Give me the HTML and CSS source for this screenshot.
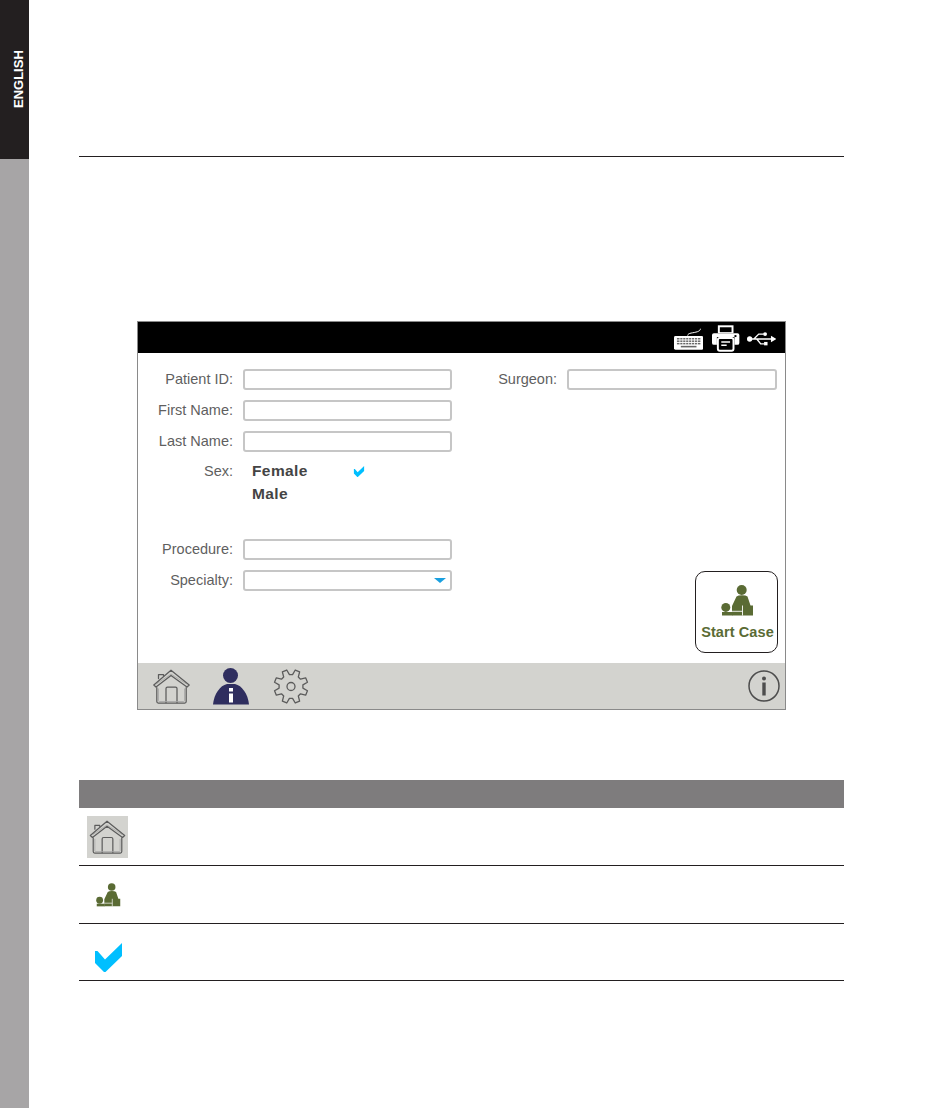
FILE: index.html
```html
<!DOCTYPE html>
<html lang="en">
<head>
<meta charset="utf-8">
<title>Patient screen</title>
<link rel="stylesheet" href="styles.css">
</head>
<body>
<svg class="defs" width="0" height="0" aria-hidden="true">
  <symbol id="home" viewBox="0 0 37 35">
    <path fill="none" stroke="#b0b0ac" stroke-width="1" d="M3.500 15 18 5 33.500 15"/>
    <g fill="none" stroke="#5c5c5c" stroke-width="1.250" stroke-linejoin="round" stroke-linecap="round">
      <path d="M5.500 9.500V5.500H10.500V6.500"/>
      <path d="M.8 16 18 1.200 36.200 16 34 18 18 6.500 3 18Z"/>
      <path d="M3.800 18.500V32.500Q3.800 34 5.300 34H31.700Q33.200 34 33.200 32.500V18.500"/>
      <path d="M13 33.500V19.500Q13 18 14.500 18H22.500Q24 18 24 19.500V33.500"/>
    </g>
    <g fill="none" stroke="#a5a5a5" stroke-width=".8">
      <path d="M5.500 19.500V31.500Q5.500 32.500 6.500 32.500H30.500Q31.500 32.500 31.500 31.500V19.500"/>
    </g>
  </symbol>
  <symbol id="case" viewBox="0 0 33 31">
    <circle cx="20.700" cy="5" r="5" fill="#5a6b34"/>
    <path fill="#5a6b34" d="M11 21 15.500 11.500Q17 10.300 21 10.300 25 10.300 26.500 11.500L29.500 20.500H32V30.500H11Z"/>
    <path fill="none" stroke="#fff" stroke-width=".9" d="M9 26.300H21.500M21.500 20.500V30.500"/>
    <circle cx="4.800" cy="22.400" r="4.500" fill="#5a6b34"/>
    <rect x="1" y="27" width="10.500" height="3.500" fill="#5a6b34"/>
  </symbol>
  <symbol id="check" viewBox="0 0 27 29">
    <path fill="#00bfff" d="M0 8H2.500L10 16.500 27 0V13L10.500 29H9L0 20Z"/>
  </symbol>
</svg>

<div class="page">
  <aside class="side">
    <div class="tab"><span class="tab-label">ENGLISH</span></div>
  </aside>

  <main class="content">
    <hr class="rule">

    <section class="screen">
      <header class="topbar">
        <svg class="i-keyboard" width="30" height="22" viewBox="0 0 30 22">
          <path d="M14 7.500C14 4.500 20 5 24 3.500 26 2.800 27 2 27 .5" fill="none" stroke="#fff" stroke-width="1"/>
          <rect x="0" y="8" width="30" height="14" rx="1.500" fill="#fff"/>
          <g fill="#666">
            <rect x="3" y="10" width="24" height="1.500"/>
            <rect x="3" y="12.500" width="24" height="1.500"/>
            <rect x="3" y="15" width="24" height="1.500"/>
            <rect x="7" y="18" width="16" height="1.600"/>
          </g>
          <path stroke="#fff" stroke-width=".8" d="M6 9.500V17M9 9.500V17M12 9.500V17M15 9.500V17M18 9.500V17M21 9.500V17M24 9.500V17"/>
        </svg>
        <svg class="i-printer" width="28" height="27" viewBox="0 0 28 27">
          <path d="M6 0H22V8H6Z" fill="#fff"/>
          <path d="M8 2H20V7H8Z" fill="#000"/>
          <path d="M2 8H26Q28 8 28 10V18Q28 20 26 20H23V12H5V20H2Q0 20 0 18V10Q0 8 2 8Z" fill="#fff"/>
          <rect x="23" y="10" width="2" height="2" fill="#000"/>
          <rect x="6" y="13" width="16" height="13" rx="2" fill="none" stroke="#fff" stroke-width="2"/>
          <path d="M9.500 17H18.500M9.500 20.500H15" stroke="#fff" stroke-width="1.600"/>
        </svg>
        <svg class="i-usb" width="30" height="14" viewBox="0 0 30 14">
          <circle cx="2.700" cy="7" r="2.700" fill="#fff"/>
          <path d="M2 7H26M7 7 12 2H17M10 7 14 12H18" fill="none" stroke="#fff" stroke-width="1.400"/>
          <path d="M24.500 3.800 30 7 24.500 10.200Z" fill="#fff"/>
          <circle cx="18.500" cy="2" r="2" fill="#fff"/>
          <rect x="17.500" y="10" width="3.500" height="3.500" fill="#fff"/>
        </svg>
      </header>

      <div class="form">
        <div class="col-left">
          <div class="row"><span class="label">Patient ID:</span><span class="field"></span></div>
          <div class="row"><span class="label">First Name:</span><span class="field"></span></div>
          <div class="row"><span class="label">Last Name:</span><span class="field"></span></div>
          <div class="sex">
            <span class="label sex-label">Sex:</span>
            <div class="sex-options">
              <div class="option"><span class="option-name">Female</span><svg class="opt-check" width="12" height="11"><use href="#check"/></svg></div>
              <div class="option"><span class="option-name">Male</span></div>
            </div>
          </div>
          <div class="row"><span class="label">Procedure:</span><span class="field"></span></div>
          <div class="row"><span class="label">Specialty:</span><span class="field select"><span class="caret"></span></span></div>
        </div>
        <div class="col-right">
          <div class="row surgeon"><span class="label-right">Surgeon:</span><span class="field field-wide"></span></div>
          <div class="start-case">
            <svg width="33" height="31"><use href="#case"/></svg>
            <span>Start Case</span>
          </div>
        </div>
      </div>

      <footer class="navbar">
        <svg class="nav-home" width="37" height="35"><use href="#home"/></svg>
        <svg class="nav-person" width="36" height="37" viewBox="0 0 36 37">
          <circle cx="17.500" cy="7.500" r="7.500" fill="#2f2e5f"/>
          <path d="M0 36.500C1 26 7 17.500 14 16H22C29 17.500 35 26 36 36.500Z" fill="#2f2e5f"/>
          <rect x="16" y="20" width="4" height="3.500" fill="#fff"/>
          <rect x="16" y="25.500" width="4" height="9" fill="#fff"/>
        </svg>
        <svg class="nav-gear" width="36" height="35" viewBox="-18 -17.500 36 35">
          <polygon fill="none" stroke="#5c5c5c" stroke-width="1.300" stroke-linejoin="round" points="11.900,1.570 16.460,4.260 14.650,8.630 9.520,7.310 7.310,9.520 8.630,14.650 4.260,16.460 1.570,11.900 -1.570,11.900 -4.260,16.460 -8.630,14.650 -7.310,9.520 -9.520,7.310 -14.650,8.630 -16.460,4.260 -11.900,1.570 -11.900,-1.570 -16.460,-4.260 -14.650,-8.630 -9.520,-7.310 -7.310,-9.520 -8.630,-14.650 -4.260,-16.460 -1.570,-11.900 1.570,-11.900 4.260,-16.460 8.630,-14.650 7.310,-9.520 9.520,-7.310 14.650,-8.630 16.460,-4.260 11.900,-1.570"/>
          <circle cx="0" cy="0" r="4" fill="none" stroke="#5c5c5c" stroke-width="1.300"/>
        </svg>
        <svg class="nav-info" width="32" height="32" viewBox="0 0 32 32">
          <circle cx="16" cy="16" r="15" fill="none" stroke="#4d4d4d" stroke-width="1.500"/>
          <circle cx="16" cy="8.500" r="2" fill="#4d4d4d"/>
          <rect x="14.300" y="12.500" width="3.400" height="13" fill="#4d4d4d"/>
        </svg>
      </footer>
    </section>

    <section class="legend">
      <div class="legend-head"></div>
      <div class="legend-row">
        <div class="legend-icon"><span class="home-tile"><svg width="37" height="34"><use href="#home"/></svg></span></div>
        <div class="legend-text"></div>
      </div>
      <div class="legend-row">
        <div class="legend-icon"><svg class="legend-case" width="25" height="24"><use href="#case"/></svg></div>
        <div class="legend-text"></div>
      </div>
      <div class="legend-row last">
        <div class="legend-icon"><svg class="legend-check" width="27" height="29"><use href="#check"/></svg></div>
        <div class="legend-text"></div>
      </div>
    </section>
  </main>
</div>
</body>
</html>
```

FILE: styles.css
```css
* { box-sizing: border-box; }
html, body { margin: 0; padding: 0; background: #fff; }
body { font-family: "Liberation Sans", Arial, sans-serif; }
.defs { display: block; height: 0; }

.page { display: flex; width: 950px; height: 1108px; overflow: hidden; }

.side { width: 29px; flex: none; background: #a7a5a6; }
.tab {
  height: 159px;
  background: #231f20;
  display: flex;
  justify-content: center;
  padding: 48px 0 0 7px;
}
.tab-label {
  writing-mode: vertical-rl;
  transform: rotate(180deg);
  height: 60px;
  line-height: 13px;
  font-size: 13px;
  font-weight: 700;
  color: #fff;
  text-align: left;
}

.content { margin-left: 50px; width: 765px; padding-top: 156px; }
.rule { height: 1px; margin: 0; border: 0; background: #231f20; }

.screen {
  width: 649px;
  height: 389px;
  margin: 164px 0 0 58px;
  border: 1px solid #8a8a8a;
  display: flex;
  flex-direction: column;
}

.topbar {
  height: 31px;
  flex: none;
  background: #000;
  display: flex;
  align-items: center;
  padding: 0 9px 0 536px;
}
.i-keyboard { margin-top: 2px; }
.i-printer { margin: 1px 0 0 9px; }
.i-usb { margin: 3px 0 0 7px; }

.form { flex: 1; display: flex; padding: 16px 8px 10px 0; }
.col-left { width: 314px; display: flex; flex-direction: column; gap: 10px; }
.col-right { flex: 1; display: flex; flex-direction: column; align-items: flex-end; justify-content: space-between; }

.row { display: flex; align-items: center; height: 21px; }
.label {
  width: 95px;
  text-align: right;
  margin: 0 10px 2px 0;
  font-size: 14.500px;
  color: #5f5f5f;
}
.label-right { font-size: 14.500px; color: #5f5f5f; margin: 0 10px 2px 0; }
.field {
  width: 209px;
  height: 21px;
  background: #fff;
  border: 2px solid #c6c6c6;
  border-radius: 3px;
  position: relative;
}
.field-wide { width: 210px; }
.caret {
  position: absolute;
  right: 4px;
  top: 6px;
  border-left: 6px solid transparent;
  border-right: 6px solid transparent;
  border-top: 5px solid #1aa0e0;
}

.sex { display: flex; height: 67px; }
.sex-label { padding-top: 2px; height: 20px; margin-top: -1px; }
.sex-options { display: flex; flex-direction: column; gap: 3px; margin-top: -1px; padding-left: 9px; }
.option { display: flex; align-items: center; height: 20px; }
.option-name {
  width: 101px;
  font-size: 15.500px;
  font-weight: 700;
  letter-spacing: .4px;
  color: #444;
}
.opt-check { display: block; }

.start-case {
  width: 83px;
  height: 82px;
  margin-right: -1px;
  border: 1px solid #231f20;
  border-radius: 10px;
  display: flex;
  flex-direction: column;
  align-items: center;
  padding: 13px 0 0 2px;
  gap: 8px;
  color: #5a6b34;
  font-size: 14.500px;
  letter-spacing: .1px;
  font-weight: 700;
  white-space: nowrap;
}

.navbar {
  height: 46px;
  flex: none;
  background: #d3d3cf;
  display: flex;
  align-items: center;
  padding: 0 5px 0 15px;
}
.nav-person { margin: 0 0 0 23px; }
.nav-gear { margin: 0 0 0 24px; }
.nav-info { margin-left: auto; }

.legend { margin-top: 70px; }
.legend-head { height: 28px; background: #7e7c7d; }
.legend-row {
  display: flex;
  height: 58px;
  border-bottom: 1px solid #231f20;
}
.legend-row.last { height: 57px; }
.legend-icon {
  width: 59px;
  flex: none;
  display: flex;
  align-items: center;
  justify-content: center;
}
.legend-text { flex: 1; }
.home-tile {
  width: 41px;
  height: 42px;
  margin-right: 2px;
  background: #d3d3cf;
  display: flex;
  align-items: center;
  justify-content: center;
}
.legend-case { margin-top: 1px; }
.legend-check { margin-top: 10px; }
```
